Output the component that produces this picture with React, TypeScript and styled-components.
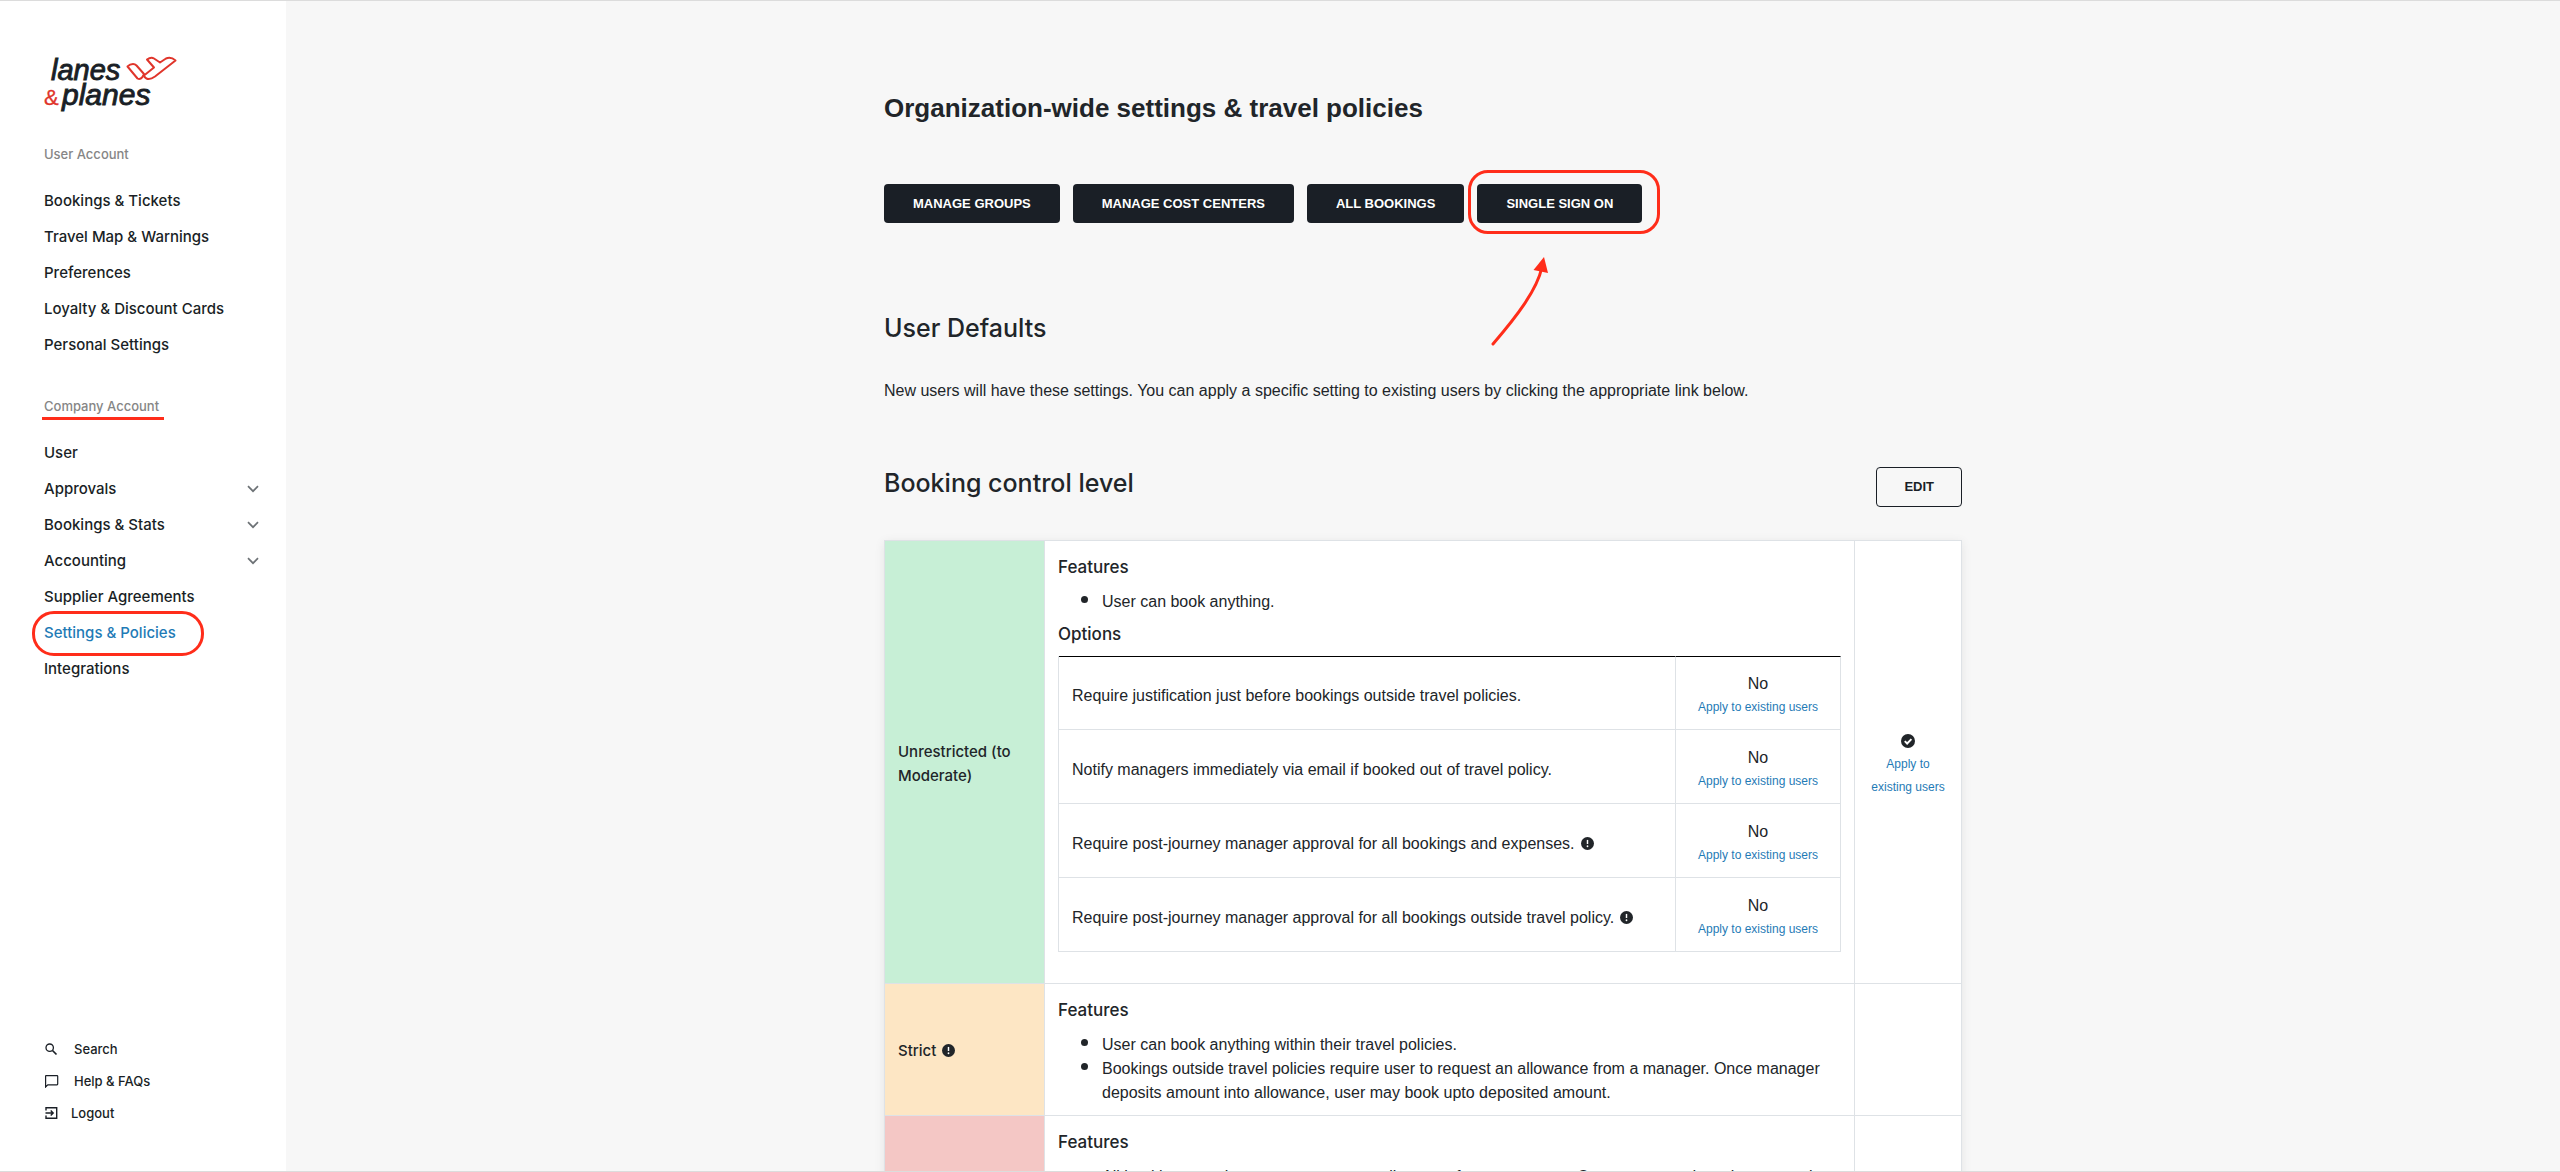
import React from 'react';
import styled, { createGlobalStyle } from 'styled-components';

const ink = '#212529';
const navy = '#1a1f26';
const link = '#1f7bb6';
const line = '#dee2e6';
const mark = '#ff2d1a';
const sans = `'Liberation Sans', Arial, sans-serif`;
const medium = `Inter, 'Liberation Sans', sans-serif`;

const GlobalStyle = createGlobalStyle`
  *, *::before, *::after { box-sizing: border-box; }
  body { margin: 0; background: #f7f7f7; color: ${ink}; font: 16px/24px ${sans}; }
  h1, h2, h3, p, ul { margin: 0; padding: 0; }
  a { text-decoration: none; color: inherit; }
  button { font: inherit; cursor: pointer; }
`;

const Shell = styled.div`
  display: flex;
  height: 100vh;
  overflow: hidden;
  border-top: 1px solid #dcdcdc;
  border-bottom: 1px solid #dcdcdc;
`;

const Sidebar = styled.aside`
  display: flex;
  flex-direction: column;
  flex: 0 0 286px;
  padding: 49px 0 42px 44px;
  background: #fff;
  font-family: ${medium};
  font-weight: 500;
  color: ${navy};
`;

const Brand = styled.a`
  display: block;
  height: 64px;
  margin-bottom: 30px;
`;

const SectionLabel = styled.h2`
  position: relative;
  align-self: flex-start;
  font-size: 13px;
  line-height: 20px;
  font-weight: 500;
  color: #868686;
`;

const Underline = styled.span`
  position: absolute;
  left: -2px;
  right: -5px;
  top: 21px;
  height: 3px;
  background: ${mark};
`;

const NavList = styled.ul`
  list-style: none;
  margin: 19px 0 33px;
`;

const NavItem = styled.li`
  display: flex;
  align-items: center;
  justify-content: space-between;
  height: 36px;
  padding-right: 27px;
`;

const NavLink = styled.a<{ $active?: boolean }>`
  position: relative;
  font-size: 15px;
  line-height: 36px;
  color: ${(p) => (p.$active ? link : 'inherit')};
`;

const Ring = styled.span<{ $inset: string; $radius: number }>`
  position: absolute;
  inset: ${(p) => p.$inset};
  border: 3px solid ${mark};
  border-radius: ${(p) => p.$radius}px;
  pointer-events: none;
`;

const ToggleButton = styled.button`
  display: flex;
  padding: 0;
  border: 0;
  background: none;
  color: #6d7276;
`;

const FooterNav = styled.nav`
  margin-top: auto;
`;

const FooterLink = styled.a<{ $gap: number }>`
  display: flex;
  align-items: center;
  gap: ${(p) => p.$gap}px;
  height: 32px;
  font-size: 13px;
`;

const Main = styled.main`
  flex: 1;
  min-width: 0;
  overflow: hidden;
`;

const Content = styled.div`
  width: 100%;
  max-width: 1078px;
  margin: 0 auto;
  padding-top: 91px;
`;

const PageTitle = styled.h1`
  font-size: 26px;
  line-height: 32px;
  font-weight: 700;
`;

const Toolbar = styled.div`
  display: flex;
  gap: 13px;
  margin: 60px 0 89px;
`;

const Action = styled.button<{ $outline?: boolean }>`
  position: relative;
  height: ${(p) => (p.$outline ? 40 : 39)}px;
  padding: 0 ${(p) => (p.$outline ? 27 : 29)}px;
  border: ${(p) => (p.$outline ? `1px solid ${navy}` : '0')};
  border-radius: 4px;
  background: ${(p) => (p.$outline ? 'transparent' : navy)};
  color: ${(p) => (p.$outline ? navy : '#fff')};
  font-size: 13px;
  font-weight: 700;
  text-transform: uppercase;
`;

const Arrow = styled.svg`
  position: absolute;
  top: 72px;
  left: 12px;
`;

const SectionTitle = styled.h2`
  font-family: ${medium};
  font-size: 25px;
  line-height: 32px;
  font-weight: 500;
`;

const Lead = styled.p`
  margin: 35px 0 64px;
`;

const SectionHead = styled.div`
  display: flex;
  align-items: flex-start;
  justify-content: space-between;
  margin-bottom: 33px;
`;

const LevelTable = styled.table`
  width: 100%;
  table-layout: fixed;
  border-spacing: 0;
  border-top: 1px solid ${line};
  border-left: 1px solid ${line};
  background: #fff;
  box-shadow: 0 2px 10px rgba(0, 0, 0, 0.08);
`;

const Col = styled.col<{ $w: string }>`
  width: ${(p) => p.$w};
`;

const LevelName = styled.th<{ $tone: string }>`
  padding: 14px 13px 11px;
  border-right: 1px solid ${line};
  border-bottom: 1px solid ${line};
  background: ${(p) => p.$tone};
  font-family: ${medium};
  font-size: 15px;
  font-weight: 500;
  text-align: left;
`;

const Cell = styled.td<{ $center?: boolean }>`
  padding: 14px 13px 10px;
  border-right: 1px solid ${line};
  border-bottom: 1px solid ${line};
  text-align: ${(p) => (p.$center ? 'center' : 'left')};
`;

const CellTitle = styled.h3`
  font-family: ${medium};
  font-size: 17px;
  line-height: 24px;
  font-weight: 500;
`;

const Bullets = styled.ul`
  list-style: none;
  margin: 11px 0 0;

  & + h3 {
    margin-top: 8px;
  }
`;

const Bullet = styled.li`
  display: flex;
  gap: 14px;
  padding-left: 23px;

  &::before {
    content: '';
    flex: 0 0 7px;
    height: 7px;
    margin-top: 6px;
    border-radius: 50%;
    background: ${ink};
  }
`;

const OptionTable = styled.table`
  width: 100%;
  margin: 10px 0 21px;
  border-spacing: 0;
  border-left: 1px solid ${line};
`;

const OptionCell = styled.td<{ $value?: boolean }>`
  width: ${(p) => (p.$value ? '165px' : 'auto')};
  padding: 16px 13px 10px;
  border-right: 1px solid ${line};
  border-bottom: 1px solid ${line};
  text-align: ${(p) => (p.$value ? 'center' : 'left')};

  tr:first-child > & {
    padding-top: 15px;
    border-top: 1px solid #000;
  }
`;

const ApplyLink = styled.a`
  display: block;
  font-size: 12px;
  line-height: 23px;
  color: ${link};
`;

const Badge = styled.svg`
  display: inline-block;
  vertical-align: -1px;
  margin-left: 6px;
`;

const CheckBadge = styled.svg`
  display: block;
  margin: 5px auto;
`;

const Info = () => (
  <Badge width="13" height="13" viewBox="0 0 16 16" role="img" aria-label="More information">
    <circle cx="8" cy="8" r="8" fill={ink} />
    <path d="M8 3.6v5" stroke="#fff" strokeWidth="1.8" />
    <circle cx="8" cy="11.4" r="1.1" fill="#fff" />
  </Badge>
);

const Check = () => (
  <CheckBadge width="14" height="14" viewBox="0 0 16 16" role="img" aria-label="Selected">
    <circle cx="8" cy="8" r="8" fill={ink} />
    <path d="M4.3 8.2l2.7 2.7 4.9-5" fill="none" stroke="#fff" strokeWidth="2.2" />
  </CheckBadge>
);

const Chevron = () => (
  <svg width="12" height="8" viewBox="0 0 12 8" fill="none" stroke="currentColor" strokeWidth="1.7">
    <path d="M1 1.2l5 5 5-5" />
  </svg>
);

const Logo = () => (
  <svg width="136" height="64" viewBox="0 0 136 64" fontFamily="'Liberation Sans', Arial, sans-serif">
    <g fill={navy} stroke={navy} strokeWidth="0.9" fontStyle="italic">
      <text x="7" y="30" fontSize="29">lanes</text>
      <text x="18" y="55" fontSize="30">planes</text>
    </g>
    <text x="0" y="55" fontSize="22" fill="#e0352b" stroke="#e0352b" strokeWidth="0.3">&amp;</text>
    <g fill="none" stroke="#e0352b" strokeWidth="2" strokeLinejoin="round">
      <path d="M83.5 16.5Q86 14 89 14Q91 14 92.5 15.5L100 24L98.5 27Q96 30 93.5 28.5Z" />
      <path d="M100 25.5L110 17.5L103 9.5Q107 6.5 110 8.5L116 12.5L122 8.5Q127 6.5 131.5 10.5L111 26.5Q106 30 102.5 28.5Q100.5 27.5 100 25.5Z" />
    </g>
  </svg>
);

const SearchIcon = () => (
  <svg width="14" height="14" viewBox="0 0 14 14" fill="none" stroke="currentColor" strokeWidth="1.3">
    <circle cx="5.7" cy="5.7" r="3.7" />
    <path d="M8.5 8.5l4 4" strokeWidth="1.7" />
  </svg>
);

const ChatIcon = () => (
  <svg width="15" height="14" viewBox="0 0 15 14" fill="none" stroke="currentColor" strokeWidth="1.2">
    <path d="M2 1.6h11q.7 0 .7.7v7.8q0 .7-.7.7H3.8L1.6 13V2.3q0-.7.4-.7z" />
  </svg>
);

const LogoutIcon = () => (
  <svg width="14" height="14" viewBox="0 0 14 14" fill="none" stroke="currentColor" strokeWidth="1.4">
    <path d="M2 4.5V1.7h10.7v10.6H2V9.5" />
    <path d="M1.5 7h7.5M6.7 4.5L9.2 7l-2.5 2.5" />
  </svg>
);

const userLinks = [
  'Bookings & Tickets',
  'Travel Map & Warnings',
  'Preferences',
  'Loyalty & Discount Cards',
  'Personal Settings',
];

const companyLinks = [
  { label: 'User' },
  { label: 'Approvals', nested: true },
  { label: 'Bookings & Stats', nested: true },
  { label: 'Accounting', nested: true },
  { label: 'Supplier Agreements' },
  { label: 'Settings & Policies', active: true },
  { label: 'Integrations' },
];

const options = [
  { text: 'Require justification just before bookings outside travel policies.' },
  { text: 'Notify managers immediately via email if booked out of travel policy.' },
  { text: 'Require post-journey manager approval for all bookings and expenses.', info: true },
  { text: 'Require post-journey manager approval for all bookings outside travel policy.', info: true },
];

const Features = ({ items }: { items: string[] }) => (
  <>
    <CellTitle>Features</CellTitle>
    <Bullets>
      {items.map((item) => (
        <Bullet key={item}>{item}</Bullet>
      ))}
    </Bullets>
  </>
);

export default function App() {
  return (
    <>
      <GlobalStyle />
      <Shell>
        <Sidebar>
          <Brand href="#" aria-label="lanes & planes">
            <Logo />
          </Brand>
          <SectionLabel>User Account</SectionLabel>
          <NavList>
            {userLinks.map((label) => (
              <NavItem key={label}>
                <NavLink href="#">{label}</NavLink>
              </NavItem>
            ))}
          </NavList>
          <SectionLabel>
            Company Account
            <Underline />
          </SectionLabel>
          <NavList>
            {companyLinks.map(({ label, nested, active }) => (
              <NavItem key={label}>
                <NavLink href="#" $active={active}>
                  {label}
                  {active && <Ring $inset="-4px -28px -5px -12px" $radius={22} />}
                </NavLink>
                {nested && (
                  <ToggleButton aria-label={`Expand ${label}`}>
                    <Chevron />
                  </ToggleButton>
                )}
              </NavItem>
            ))}
          </NavList>
          <FooterNav>
            <FooterLink href="#" $gap={16}>
              <SearchIcon />
              Search
            </FooterLink>
            <FooterLink href="#" $gap={15}>
              <ChatIcon />
              Help &amp; FAQs
            </FooterLink>
            <FooterLink href="#" $gap={13}>
              <LogoutIcon />
              Logout
            </FooterLink>
          </FooterNav>
        </Sidebar>
        <Main>
          <Content>
            <PageTitle>Organization-wide settings &amp; travel policies</PageTitle>
            <Toolbar>
              <Action>Manage groups</Action>
              <Action>Manage cost centers</Action>
              <Action>All bookings</Action>
              <Action>
                Single sign on
                <Ring $inset="-14px -18px -11px -9px" $radius={20} />
                <Arrow width="70" height="92" viewBox="0 0 70 92" aria-hidden="true">
                  <path d="M4 88C28 60 48 34 53 11" fill="none" stroke={mark} strokeWidth="3" strokeLinecap="round" />
                  <path d="M55 1L44.5 14L59 17z" fill={mark} />
                </Arrow>
              </Action>
            </Toolbar>
            <SectionTitle>User Defaults</SectionTitle>
            <Lead>
              New users will have these settings. You can apply a specific setting to existing users by clicking the
              appropriate link below.
            </Lead>
            <SectionHead>
              <SectionTitle>Booking control level</SectionTitle>
              <Action $outline>Edit</Action>
            </SectionHead>
            <LevelTable>
              <colgroup>
                <Col $w="160px" />
                <Col $w="auto" />
                <Col $w="107px" />
              </colgroup>
              <tbody>
                <tr>
                  <LevelName scope="row" $tone="#c7efd6">
                    Unrestricted (to Moderate)
                  </LevelName>
                  <Cell>
                    <Features items={['User can book anything.']} />
                    <CellTitle>Options</CellTitle>
                    <OptionTable>
                      <tbody>
                        {options.map(({ text, info }) => (
                          <tr key={text}>
                            <OptionCell>
                              {text}
                              {info && <Info />}
                            </OptionCell>
                            <OptionCell $value>
                              No
                              <ApplyLink href="#">Apply to existing users</ApplyLink>
                            </OptionCell>
                          </tr>
                        ))}
                      </tbody>
                    </OptionTable>
                  </Cell>
                  <Cell $center>
                    <Check />
                    <ApplyLink href="#">Apply to existing users</ApplyLink>
                  </Cell>
                </tr>
                <tr>
                  <LevelName scope="row" $tone="#fde6c4">
                    Strict
                    <Info />
                  </LevelName>
                  <Cell>
                    <Features
                      items={[
                        'User can book anything within their travel policies.',
                        'Bookings outside travel policies require user to request an allowance from a manager. Once manager deposits amount into allowance, user may book upto deposited amount.',
                      ]}
                    />
                  </Cell>
                  <Cell />
                </tr>
                <tr>
                  <LevelName scope="row" $tone="#f4c7c5" />
                  <Cell>
                    <Features
                      items={[
                        'All bookings require user to request an allowance from a manager. Once manager deposits amount into allowance, user may book upto deposited amount.',
                      ]}
                    />
                  </Cell>
                  <Cell />
                </tr>
              </tbody>
            </LevelTable>
          </Content>
        </Main>
      </Shell>
    </>
  );
}
